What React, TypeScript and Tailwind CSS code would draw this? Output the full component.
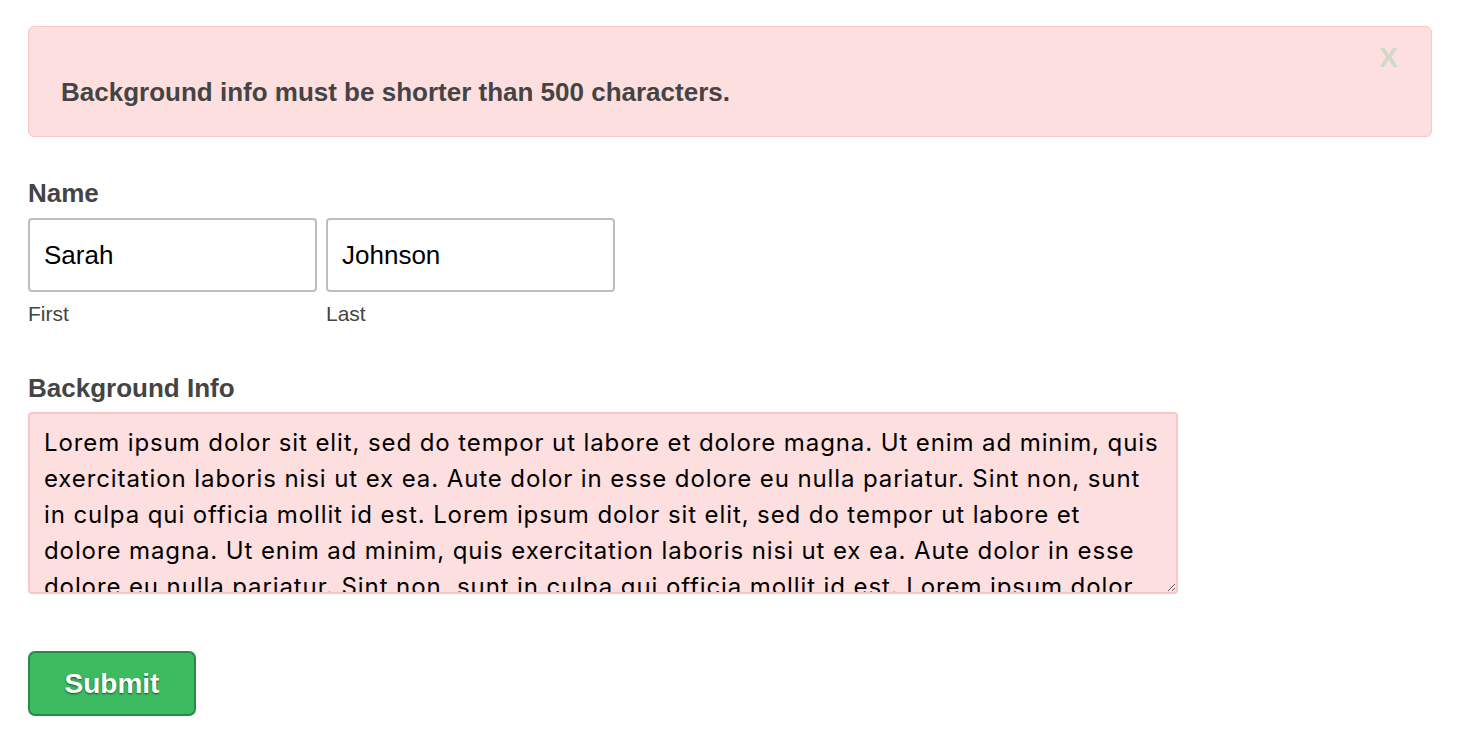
const bio = [
  "Lorem ipsum dolor sit elit, sed do tempor ut labore et dolore magna. Ut enim ad minim, quis",
  "exercitation laboris nisi ut ex ea. Aute dolor in esse dolore eu nulla pariatur. Sint non, sunt",
  "in culpa qui officia mollit id est. Lorem ipsum dolor sit elit, sed do tempor ut labore et",
  "dolore magna. Ut enim ad minim, quis exercitation laboris nisi ut ex ea. Aute dolor in esse",
  "dolore eu nulla pariatur. Sint non, sunt in culpa qui officia mollit id est. Lorem ipsum dolor",
  "sit elit, sed do tempor ut labore et dolore magna. Ut enim ad minim, quis exercitation laboris",
  "nisi ut ex ea. Aute dolor in esse dolore eu nulla pariatur. Sint non, sunt in culpa qui officia",
  "mollit id est.",
].join("\n");

export default function App() {
  return (
    <div className="min-h-screen bg-white px-[28px] pt-[26px] font-['Liberation_Sans',Arial,sans-serif] text-[#444]">
      {/* Error alert */}
      <div className="relative h-[111px] rounded-[6px] border border-[#fbc6c6] bg-[#fddfdf] px-[32px] pt-[50px]">
        <p className="text-[26px] font-bold leading-[30px]">Background info must be shorter than 500 characters.</p>
        <button className="absolute right-[33px] top-[17px] text-[28px] font-bold leading-none text-[#cddac5]">X</button>
      </div>

      <form className="mt-[41px]">
        {/* Name */}
        <label className="block text-[26px] font-bold leading-[30px]">Name</label>
        <div className="mt-[10px] flex gap-[9px]">
          <div className="w-[289px]">
            <input
              defaultValue="Sarah"
              className="h-[74px] w-full rounded-[4px] border-2 border-[#bdbdbd] bg-white px-[14px] text-[26px] text-black outline-none"
            />
            <span className="mt-[10px] block text-[21px] leading-[24px]">First</span>
          </div>
          <div className="w-[289px]">
            <input
              defaultValue="Johnson"
              className="h-[74px] w-full rounded-[4px] border-2 border-[#bdbdbd] bg-white px-[14px] text-[26px] text-black outline-none"
            />
            <span className="mt-[10px] block text-[21px] leading-[24px]">Last</span>
          </div>
        </div>

        {/* Background info */}
        <label className="mt-[47px] block text-[26px] font-bold leading-[30px]">Background Info</label>
        <textarea
          defaultValue={bio}
          wrap="off"
          className="mt-[9px] block h-[182px] w-[1150px] resize-y overflow-hidden rounded-[4px] border-2 border-[#fcc5c5] bg-[#fddfdf] pl-[14px] pr-[8px] pt-[11px] font-['Inter',sans-serif] text-[24px] leading-[36px] tracking-[0.9px] text-black outline-none"
        />

        <button
          type="button"
          className="mt-[57px] h-[65px] w-[168px] rounded-[7px] border-2 border-[#2a8a45] bg-[#3dbb61] text-[28px] font-bold text-white [text-shadow:0_1px_2px_rgba(0,60,20,0.8)]"
        >
          Submit
        </button>
      </form>
    </div>
  );
}
